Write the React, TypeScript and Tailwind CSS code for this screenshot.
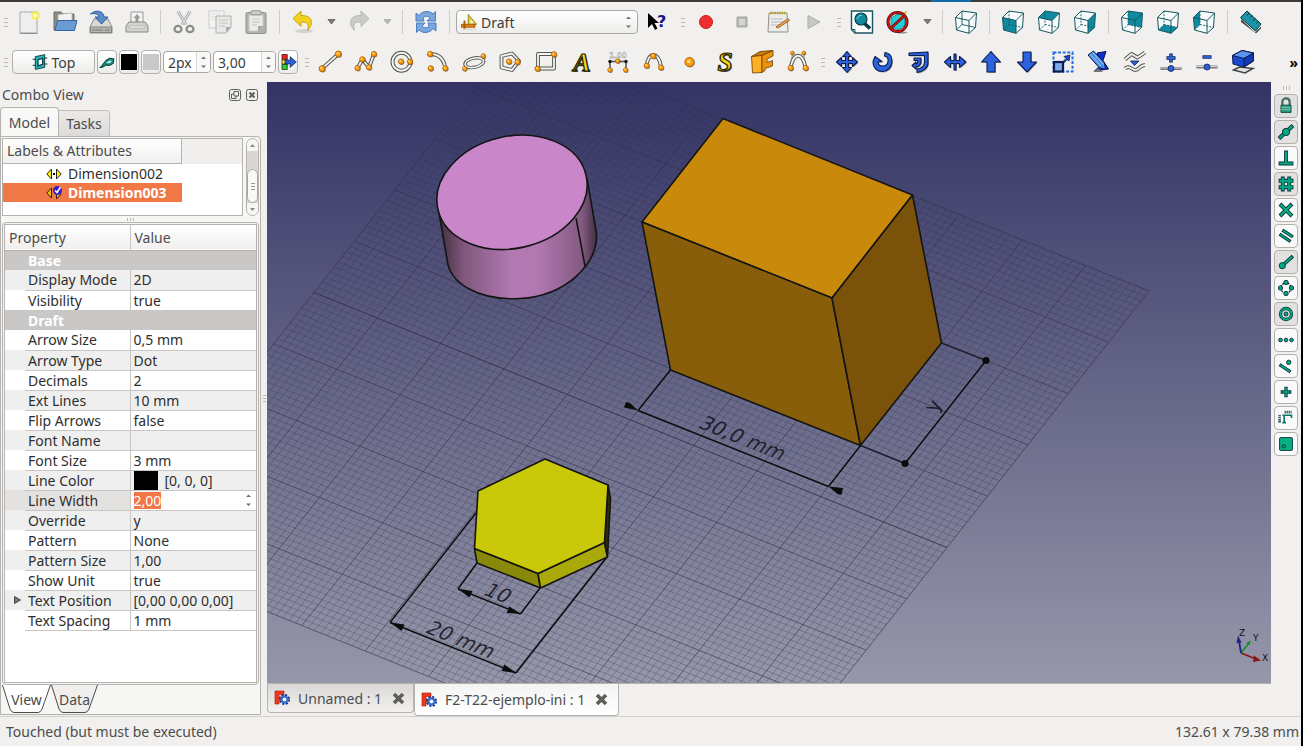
import type { ReactNode } from "react";

/* ---------- icon primitives ---------- */

function Icon({ children, size = 24 }: { children: ReactNode; size?: number }) {
  return (
    <svg width={size} height={size} viewBox="0 0 24 24" fill="none" className="shrink-0 overflow-visible" aria-hidden="true">
      {children}
    </svg>
  );
}

function Ball({ x, y, r = 2.6 }: { x: number; y: number; r?: number }) {
  return (
    <g>
      <circle cx={x + 0.7} cy={y + 0.8} r={r} fill="#000" opacity="0.45" />
      <circle cx={x} cy={y} r={r} fill="#f99d10" stroke="#b36200" strokeWidth="0.9" />
      <circle cx={x - 0.7} cy={y - 0.7} r={r * 0.4} fill="#ffd27a" />
    </g>
  );
}

function Tube({ d }: { d: string }) {
  return (
    <g strokeLinejoin="round">
      <path d={d} stroke="#555753" strokeWidth="3.8" />
      <path d={d} stroke="#f4f4f2" strokeWidth="1.8" />
    </g>
  );
}

function Blue({ d }: { d: string }) {
  return (
    <g strokeLinejoin="round">
      <path d={d} transform="translate(1 1)" fill="#777" opacity="0.6" />
      <path d={d} fill="#2c62dd" stroke="#0c1d4d" strokeWidth="1.1" />
    </g>
  );
}

function Cube({ face }: { face?: string }) {
  return (
    <Icon>
      <path d="M1.500 7.500 8 1 22.500 3 21.500 17.500 15 23.300 2.500 20z" fill="#f8fbfb" />
      {face && <path d={face} fill="#0e8ba0" />}
      <g stroke="#16565f" strokeLinejoin="round">
        <path d="M1.500 7.500 15 10.500V23.300L2.500 20zM1.500 7.500 8 1 22.500 3 15 10.500M22.500 3 21.500 17.500 15 23.300" />
        <path d="M8 1V14.500L2.500 20M8 14.500l13.500 3" strokeWidth=".9" strokeDasharray={face ? "2 1.2" : undefined} />
      </g>
    </Icon>
  );
}

const faces = {
  front: "M1.5 7.5 15 10.5V23.3L2.5 20z",
  top: "M1.5 7.5 8 1 22.5 3 15 10.5z",
  right: "M15 10.5 22.5 3 21.5 17.5 15 23.3z",
  rear: "M8 1 22.5 3 21.5 17.5 8 14.5z",
  bottom: "M2.5 20 8 14.5 21.5 17.5 15 23.3z",
  left: "M1.5 7.5 8 1V14.5L2.5 20z",
};

/* ---------- toolbar pieces ---------- */

function Handle() {
  return (
    <span className="flex h-8 w-[11px] shrink-0 flex-col items-center justify-center gap-[3px]">
      <i className="h-px w-1 bg-[#bdbbb8]" />
      <i className="h-px w-1 bg-[#bdbbb8]" />
      <i className="h-px w-1 bg-[#bdbbb8]" />
    </span>
  );
}

function Separator() {
  return (
    <span className="flex w-[11px] shrink-0 justify-center">
      <i className="h-6 w-px bg-[#cfcdca]" />
    </span>
  );
}

function ToolButton({ label, children }: { label: string; children: ReactNode }) {
  return (
    <button type="button" aria-label={label} title={label} className="flex h-8 w-9 shrink-0 items-center justify-center">
      {children}
    </button>
  );
}

function MenuArrow({ label, faded }: { label: string; faded?: boolean }) {
  return (
    <button type="button" aria-label={label} className="flex h-8 w-5 shrink-0 items-center justify-center">
      <svg width="9" height="6" viewBox="0 0 9 6" aria-hidden="true">
        <path d="M1 .5h7L4.500 5z" fill={faded ? "#b9b7b4" : "#807e7b"} stroke={faded ? "#aaa8a5" : "#5f5e5b"} strokeWidth=".8" />
      </svg>
    </button>
  );
}

function StepArrows() {
  return (
    <svg width="7" height="14" viewBox="0 0 7 14" fill="#73716e" aria-hidden="true">
      <path d="M3.500 1.500 6 4H1zM3.500 13 6 10.500H1z" />
    </svg>
  );
}

function Spin({ label, value, wide }: { label: string; value: string; wide?: boolean }) {
  return (
    <span
      className={`flex h-[22px] shrink-0 items-center overflow-hidden rounded border border-[#a9a6a2] bg-white ${
        wide ? "w-[63px]" : "w-12"
      }`}
    >
      <input aria-label={label} defaultValue={value} className="h-full min-w-0 flex-1 pl-1 text-[14px] text-[#3c3c3c] outline-none" />
      <span className="flex h-full w-[14px] items-center justify-center border-l border-[#d8d6d3] bg-[#f8f8f7]">
        <StepArrows />
      </span>
    </span>
  );
}

const boxed =
  "flex h-6 shrink-0 items-center justify-center rounded border border-[#b3b0ac] bg-linear-to-b from-white to-[#ececea]";

/* ---------- icons of the file and view toolbar ---------- */

const fileIcons: [string, ReactNode][] = [
  [
    "New",
    <Icon>
      <path d="M3 2h17v21H3z" fill="#eee" stroke="#a9a9a7" />
      <path d="M3 23.4h17.5" stroke="#888" />
      <circle cx="18.5" cy="5.5" r="4.5" fill="#f7ee3c" opacity=".75" />
      <circle cx="18.5" cy="5.5" r="2" fill="#fffbc0" />
    </Icon>,
  ],
  [
    "Open",
    <Icon>
      <path d="M1 20V2h7l2 2h11v16z" fill="#8b8b88" stroke="#6c6c69" />
      <path d="M5 4.5 19 3v8H5z" fill="#f3f3f2" stroke="#b0b0ad" strokeWidth=".8" />
      <path d="M4.5 10.5H24l-2.5 10H2z" fill="#6a9bd3" stroke="#3465a4" />
    </Icon>,
  ],
  [
    "Save",
    <Icon>
      <path d="M5 9h14l4 8v6H1v-6z" fill="#d9d9d7" stroke="#888" />
      <path d="M1.5 17h21v5.5h-21z" fill="#b4b4b1" stroke="#858582" />
      <path d="M3 20h11M16 20h5" stroke="#7b7b78" />
      <path d="M1.500 4C7-1 15 1 15 7h4l-6.500 7L6 7h4c0-3-4-4-8.500-3z" fill="#5b8cc6" stroke="#2f5f9f" />
    </Icon>,
  ],
  [
    "Print",
    <Icon>
      <path d="M6 2h12v11H6z" fill="#f3f3f2" stroke="#999" />
      <path d="M12 4l3.500 4h-2v4h-3V8h-2z" fill="#999" />
      <path d="M4 12h16l3 4v6H1v-6z" fill="#d3d3d0" stroke="#858582" />
      <path d="M4 16h16v2H4z" fill="#fafafa" stroke="#999" strokeWidth=".6" />
    </Icon>,
  ],
];

const clipIcons: [string, ReactNode][] = [
  [
    "Cut",
    <Icon>
      <path d="M6 1.500l8 13M18 1.500l-8 13" stroke="#aaa" strokeWidth="3" />
      <path d="M6 1.500l8 13M18 1.500l-8 13" stroke="#e2e2e0" strokeWidth="1.200" />
      <ellipse cx="6" cy="19" rx="3.500" ry="3.200" stroke="#8c8c89" strokeWidth="2.200" />
      <ellipse cx="18" cy="19" rx="3.500" ry="3.200" stroke="#8c8c89" strokeWidth="2.200" />
    </Icon>,
  ],
  [
    "Copy",
    <Icon>
      <path d="M1 1h15v17H1z" fill="#f4f4f3" stroke="#ccc" />
      <path d="M3 4h10M3 7h10M3 10h10" stroke="#ddd" />
      <path d="M8 6h15v11l-5 6H8z" fill="#e9e9e7" stroke="#b0b0ad" />
      <path d="M11 10h9M11 13h9M11 16h6" stroke="#c2c2bf" />
      <path d="M18 23v-6h5z" fill="#aaa" />
    </Icon>,
  ],
  [
    "Paste",
    <Icon>
      <rect x="2" y="2.500" width="20" height="21" rx="1.500" fill="#b0b0ad" stroke="#8f8f8c" />
      <path d="M5 5h14v11l-5 5H5z" fill="#ececea" stroke="#c8c8c5" />
      <path d="M8 9h8M8 12h8M8 15h5" stroke="#c2c2bf" />
      <rect x="7" y=".800" width="10" height="4" rx="1" fill="#cfcfcc" stroke="#8f8f8c" />
      <path d="M14 21v-5h5z" fill="#a5a5a2" />
    </Icon>,
  ],
];

const viewIcons: [string, ReactNode][] = [
  [
    "Fit all",
    <Icon>
      <path d="M1.500 1H22.500V23H5L1.500 19.500z" fill="#fff" stroke="#16565f" strokeWidth="1.400" />
      <path d="M1.500 19.500H5V23" stroke="#16565f" />
      <path d="M14 13l6 5.500" stroke="#083c46" strokeWidth="3.600" />
      <circle cx="11" cy="9" r="6" fill="#0e8ba0" stroke="#083c46" strokeWidth="1.200" />
      <path d="M7.500 9a3.500 3.500 0 0 1 4-3.500" stroke="#8fe0ea" />
    </Icon>,
  ],
  [
    "Draw style",
    <Icon>
      <path d="M12 21.500l10 .5-3 1.500h-7z" fill="#333" opacity=".5" />
      <path d="M5 8l6-3.500h8v11l-6 4-8-1.500z" fill="#21cfd9" stroke="#0b7f88" strokeWidth=".8" />
      <path d="M14 8l6.500-6.500" stroke="#e8b53a" strokeWidth="2" />
      <circle cx="11.500" cy="12" r="9.500" stroke="#5a0909" strokeWidth="3" />
      <path d="M5 18 18 6" stroke="#5a0909" strokeWidth="3" />
      <circle cx="11.500" cy="12" r="9.500" stroke="#c81818" strokeWidth="1.700" />
      <path d="M5 18 18 6" stroke="#c81818" strokeWidth="1.700" />
    </Icon>,
  ],
];

/* ---------- draft creation and modification icons ---------- */

const draftIcons: [string, ReactNode][] = [
  ["Line", <Icon><Tube d="M4 18.700 20.300 4" /><Ball x={4} y={18.7} r={3} /><Ball x={20.3} y={4} r={3} /></Icon>],
  [
    "Wire",
    <Icon>
      <Tube d="M3.500 18l5-8.500 6.500 8L20 4" />
      <Ball x={3.5} y={18} /><Ball x={8.3} y={9.3} /><Ball x={15} y={17.3} /><Ball x={20} y={4} />
    </Icon>,
  ],
  [
    "Circle",
    <Icon>
      <circle cx="11.500" cy="11.700" r="9" stroke="#555753" strokeWidth="4" />
      <circle cx="11.500" cy="11.700" r="9" stroke="#f4f4f2" strokeWidth="2" />
      <Ball x={11} y={11.5} /><Ball x={20} y={11.7} />
    </Icon>,
  ],
  ["Arc", <Icon><Tube d="M4 4C13 4 18 9 19.300 18.300" /><Ball x={4} y={4} /><Ball x={4.7} y={18.3} /><Ball x={19.3} y={18.3} /></Icon>],
  [
    "Ellipse",
    <Icon>
      <g transform="rotate(-12 12.300 12.700)">
        <ellipse cx="12.300" cy="12.700" rx="9.500" ry="4.600" stroke="#555753" strokeWidth="3.400" />
        <ellipse cx="12.300" cy="12.700" rx="9.500" ry="4.600" stroke="#f4f4f2" strokeWidth="1.600" />
      </g>
      <Ball x={2.7} y={18.7} r={2.2} /><Ball x={21.3} y={6} r={2.2} />
    </Icon>,
  ],
  ["Polygon", <Icon><Tube d="M3.500 6 14 3.500l7 7.500-7 9-10.500-2.500z" /><Ball x={11} y={11.5} /><Ball x={19.5} y={12} /></Icon>],
  ["Rectangle", <Icon><Tube d="M4 4h16v14.500H4z" /><Ball x={20} y={4.3} /><Ball x={3.5} y={18.7} /></Icon>],
  [
    "Text",
    <Icon>
      <g fontFamily="'Liberation Serif', serif" fontWeight="700" fontStyle="italic" fontSize="26" textAnchor="middle">
        <text x="13" y="22" fill="#555">A</text>
        <text x="12" y="21" fill="#ffd21f" stroke="#1a1a00" strokeWidth="1.200">A</text>
      </g>
    </Icon>,
  ],
  [
    "Dimension",
    <Icon>
      <text x="12" y="8" fontFamily="'Liberation Sans', sans-serif" fontWeight="700" fontSize="9" textAnchor="middle" fill="#fff" stroke="#888" strokeWidth=".400">1.00</text>
      <path d="M4 12v8M20 12v8" stroke="#777" strokeWidth="2" />
      <path d="M4 11.500h16" stroke="#555" strokeWidth="1.600" />
      <circle cx="4" cy="11.500" r="1.700" fill="#111" /><circle cx="20" cy="11.500" r="1.700" fill="#111" />
      <Ball x={11.7} y={11} r={2.2} /><Ball x={4} y={20} r={2.2} /><Ball x={19.7} y={20} r={2.2} />
    </Icon>,
  ],
  ["B-spline", <Icon><Tube d="M4.700 16C5 3 17 0 19 17" /><Ball x={4.7} y={15.7} /><Ball x={11.3} y={6} /><Ball x={19} y={17.5} /></Icon>],
  ["Point", <Icon><Ball x={11.5} y={12} r={4.6} /></Icon>],
  [
    "Shape string",
    <Icon>
      <g fontFamily="'Liberation Serif', serif" fontWeight="700" fontStyle="italic" fontSize="27" textAnchor="middle">
        <text x="12" y="21.500" fill="#555">S</text>
        <text x="11" y="20.500" fill="#f3cf1a" stroke="#2b2500" strokeWidth="1.200">S</text>
      </g>
    </Icon>,
  ],
  [
    "Facebinder",
    <Icon>
      <g stroke="#6b3f00" strokeLinejoin="round" strokeWidth=".8">
        <path d="M1.500 6.500 10 1.500 23 .500 12 5.500z" fill="#c77c07" />
        <path d="M1.500 6.500 12 5.500V22.500L2.500 23z" fill="#ffae24" />
        <path d="M12 5.500 23 .500V6l-6 3v3.500l5.500-2v5.500L15 18.500v2L12 22.500z" fill="#ec920f" />
      </g>
    </Icon>,
  ],
  [
    "Bezier curve",
    <Icon>
      <path d="M4.700 17 6.500 3M19.500 17 17.500 3" stroke="#777" strokeWidth=".800" />
      <Tube d="M4.700 17C8 2 16 2 19.500 17" />
      <Ball x={6.3} y={3} r={1.8} /><Ball x={17.7} y={3} r={1.8} />
      <Ball x={4.7} y={18} /><Ball x={19.7} y={18} />
    </Icon>,
  ],
];

const modifyIcons: [string, ReactNode][] = [
  ["Move", <Icon><Blue d="M12 1.500l4.500 5h-3v4h4v-3l5 4.500-5 4.500v-3h-4v4h3L12 22.500 7.500 17.500h3v-4h-4v3l-5-4.500 5-4.500v3h4v-4h-3z" /></Icon>],
  ["Rotate", <Icon><Blue d="M2 11.500c0 14 19 13 19-.500 0-5-3-8-7-8.500L13.500 6c3 .500 4 3 3.500 5.500-1 6-9.500 6-10 .500l4-.500L4 6.500z" /></Icon>],
  ["Offset", <Icon><Blue d="M2 3l19-1v11c0 5-5 9-11 9.500V19c4 0 7.500-3 7.500-7V5.500H2zM7 8h7v4c0 3-3 5-5 5v2l-4-3.500L9 12v2c2 0 2-3 1.500-3.500H7z" /></Icon>],
  ["Trimex", <Icon><Blue d="M1.500 12 7.500 6.500v4H11V4h2v6.500h3.500v-4L23 12l-6.500 5.500v-4H13V20h-2v-6.500H7.500v4z" /></Icon>],
  ["Upgrade", <Icon><Blue d="M12 1.500 21.500 12H16v10H8V12H2.500z" /></Icon>],
  ["Downgrade", <Icon><Blue d="M12 22 2.500 12H8V2h8v10h5.500z" /></Icon>],
  [
    "Scale",
    <Icon>
      <rect x="2.500" y="2.500" width="19" height="19" stroke="#1f6fe8" strokeWidth="2" strokeDasharray="3 1.600" />
      <rect x="3" y="12" width="9" height="9.500" fill="#7fa9ea" stroke="#0c1d4d" strokeWidth="2.200" />
      <path d="M12 11.500l3-3-2-2 6-1.500-1 6-2-1.500-2.500 3z" fill="#1b49c8" stroke="#0c1d4d" strokeWidth=".800" />
    </Icon>,
  ],
  [
    "Edit",
    <Icon>
      <path d="M10 3l9-1.500-3 9 5.500 8.500-14 2L14 15z" fill="#0d2fd0" stroke="#06123f" />
      <path d="M1 5 6.500 1l11 12 1 6.500-6.500-2z" fill="#4a8de8" stroke="#0c1d4d" />
      <path d="M3 4l11 12M5.500 2.500l11 12" stroke="#a9cbf8" />
      <path d="M6 22l5-3.500 5 3.500z" fill="#777" />
    </Icon>,
  ],
  [
    "Wire to B-spline",
    <Icon>
      <Tube d="M2 9.500 8.500 4l6 3.500L22 2.500" />
      <Tube d="M2 18.500C7 14 9 21 13 20s3-4.500 9-5" />
      <path d="M7.500 11h8.500l-4.500 4.500z" fill="#2c62dd" stroke="#0c1d4d" strokeWidth=".8" />
    </Icon>,
  ],
  [
    "Add point",
    <Icon>
      <path d="M12 3.500v9M7.500 8h9" stroke="#0c1d4d" strokeWidth="3.400" />
      <path d="M12 4.300v7.400M8.300 8h7.400" stroke="#2c62dd" strokeWidth="1.900" />
      <path d="M1.500 18.500h21" stroke="#777" strokeWidth="3" /><path d="M2 18h20" stroke="#ddd" />
      <circle cx="12" cy="18.500" r="3" fill="#2c62dd" stroke="#0c1d4d" strokeWidth=".800" />
    </Icon>,
  ],
  [
    "Delete point",
    <Icon>
      <path d="M7.500 7h9" stroke="#0c1d4d" strokeWidth="3.400" /><path d="M8.300 7h7.400" stroke="#2c62dd" strokeWidth="1.900" />
      <path d="M1.500 17h21" stroke="#777" strokeWidth="3" /><path d="M2 16.500h20" stroke="#ddd" />
      <circle cx="12" cy="17" r="3" fill="#2c62dd" stroke="#0c1d4d" strokeWidth=".800" />
    </Icon>,
  ],
  [
    "Shape 2D view",
    <Icon>
      <path d="M2.500 20l6-3 13.500 1.500-8 4.500z" fill="#e6e6e4" stroke="#444" strokeWidth="1.500" />
      <path d="M1.500 5.500 11 .500l11.500 2.500V11L13 17 2 14z" fill="#1a49cf" stroke="#081a52" />
      <path d="M1.500 5.500 11 .500l11.500 2.500L13 8.500z" fill="#5b93f0" stroke="#081a52" />
      <path d="M13 8.500 22.500 3v8L13 17z" fill="#1238b4" stroke="#081a52" />
    </Icon>,
  ],
];

/* ---------- snap icons ---------- */

function Green({ d, w = 3 }: { d: string; w?: number }) {
  return (
    <g strokeLinecap="square">
      <path d={d} stroke="#08323a" strokeWidth={w + 1.8} />
      <path d={d} stroke="#06a880" strokeWidth={w} />
    </g>
  );
}

function Dots({ at, r = 2.4 }: { at: number[][]; r?: number }) {
  return (
    <>
      {at.map(([x, y]) => (
        <circle key={`${x}-${y}`} cx={x} cy={y} r={r} fill="#06a880" stroke="#08323a" strokeWidth="1" />
      ))}
    </>
  );
}

const snapIcons: { label: string; on: boolean; art: ReactNode }[] = [
  {
    label: "Snap lock",
    on: true,
    art: (
      <>
        <path d="M8 11V7.500c0-5 8-5 8 0V11" stroke="#406a62" strokeWidth="2.400" />
        <path d="M6.500 11h11v8h-11z" fill="#2b9a7d" stroke="#0d4a3c" />
        <path d="M7 13.500h10M7 16h10" stroke="#72c9b0" />
      </>
    ),
  },
  { label: "Snap midpoint", on: true, art: <><Green d="M6 17.500 18 6.500" w={2.6} /><Dots at={[[12, 12]]} r={4} /></> },
  { label: "Snap perpendicular", on: false, art: <Green d="M12 6v11M6 18h12" w={2.4} /> },
  { label: "Snap grid", on: true, art: <Green d="M8.500 6v12M15.500 6v12M6 8.500h12M6 15.500h12" w={2.4} /> },
  { label: "Snap intersection", on: false, art: <Green d="M7 7l10 10M17 7 7 17" w={2.6} /> },
  { label: "Snap parallel", on: false, art: <Green d="M6.500 11l9 6M9.500 6.500l8.500 5.500" w={1.8} /> },
  { label: "Snap endpoint", on: true, art: <><Green d="M9 15l9-8" w={2.2} /><Dots at={[[8, 16]]} r={3.4} /></> },
  {
    label: "Snap angle",
    on: false,
    art: (
      <>
        <circle cx="12" cy="12" r="5.500" stroke="#08323a" strokeWidth="1.500" strokeDasharray="2 1" />
        <circle cx="12" cy="12" r="3" fill="#fafafa" />
        <Dots at={[[12, 6], [18, 12], [12, 18], [6, 12]]} />
      </>
    ),
  },
  {
    label: "Snap center",
    on: true,
    art: (
      <>
        <circle cx="12" cy="12" r="6" stroke="#08323a" strokeWidth="3.600" />
        <circle cx="12" cy="12" r="6" stroke="#06a880" strokeWidth="2" />
        <Dots at={[[12, 12]]} r={2.2} />
      </>
    ),
  },
  { label: "Snap extension", on: false, art: <Dots at={[[6, 12], [12, 12], [18, 12]]} r={2} /> },
  { label: "Snap near", on: false, art: <><Green d="M6.500 11.500l9 6" w={1.8} /><Dots at={[[15, 8]]} r={2.4} /></> },
  { label: "Snap ortho", on: false, art: <Green d="M12 8v8M8 12h8" w={1.8} /> },
  {
    label: "Snap dimensions",
    on: false,
    art: (
      <>
        <path d="M10 18V9h8v3M8 9h4M8 17h4" stroke="#0c7a62" strokeWidth="1.800" />
        <path d="M5 9v8" stroke="#08323a" strokeWidth="3" strokeDasharray="1.200 1" />
        <path d="M10.500 5.500h7.500" stroke="#08323a" strokeWidth="3" strokeDasharray="1.200 1" />
      </>
    ),
  },
  {
    label: "Working plane",
    on: false,
    art: (
      <>
        <rect x="5" y="5" width="14" height="14" rx="1" fill="#06b083" stroke="#08323a" />
        <circle cx="9.500" cy="14.500" r="1.800" stroke="#08323a" />
      </>
    ),
  },
];

/* ---------- property editor ---------- */

type Property = { name: string; value?: string; group?: boolean };

const properties: Property[] = [
  { name: "Base", group: true },
  { name: "Display Mode", value: "2D" },
  { name: "Visibility", value: "true" },
  { name: "Draft", group: true },
  { name: "Arrow Size", value: "0,5 mm" },
  { name: "Arrow Type", value: "Dot" },
  { name: "Decimals", value: "2" },
  { name: "Ext Lines", value: "10 mm" },
  { name: "Flip Arrows", value: "false" },
  { name: "Font Name", value: "" },
  { name: "Font Size", value: "3 mm" },
  { name: "Line Color", value: "[0, 0, 0]" },
  { name: "Line Width", value: "2,00" },
  { name: "Override", value: "y" },
  { name: "Pattern", value: "None" },
  { name: "Pattern Size", value: "1,00" },
  { name: "Show Unit", value: "true" },
  { name: "Text Position", value: "[0,00 0,00 0,00]" },
  { name: "Text Spacing", value: "1 mm" },
];

function PropertyValue({ property }: { property: Property }) {
  if (property.name === "Line Color") {
    return (
      <span className="flex items-center gap-[7px]">
        <i className="h-[19px] w-6 bg-black" />
        {property.value}
      </span>
    );
  }
  if (property.name === "Line Width") {
    return (
      <span className="flex items-center justify-between pr-1">
        <input aria-label="Line Width" defaultValue={property.value} className="h-[17px] field-sizing-content bg-[#f07746] text-white outline-none" />
        <StepArrows />
      </span>
    );
  }
  return <>{property.value}</>;
}

function PropertyTable() {
  return (
    <table className="w-full table-fixed border-collapse text-left leading-[19px] whitespace-nowrap text-[#2e2e2e]">
      <colgroup>
        <col className="w-5" />
        <col className="w-[105px]" />
        <col />
      </colgroup>
      <thead>
        <tr className="h-[25px] border-b border-[#b5b2af] bg-linear-to-b from-white to-[#f0efee] text-[#4c4c4c]">
          <th colSpan={2} className="border-r border-[#c8c6c3] pl-1 font-normal">Property</th>
          <th className="pl-1 font-normal">Value</th>
        </tr>
      </thead>
      <tbody>
        {properties.map((property, i) =>
          property.group ? (
            <tr key={property.name} className="h-5 bg-[#c9c8c7] font-bold text-white">
              <td className="p-0" />
              <td colSpan={2} className="p-0 pl-[3px]">{property.name}</td>
            </tr>
          ) : (
            <tr key={property.name} className={`h-5 ${i % 2 ? "bg-[#efefef]" : "bg-white"}`}>
              <td className={`p-0 ${property.name === "Line Width" ? "bg-[#e3e2e0]" : ""}`}>
                {property.name === "Text Position" && (
                  <svg width="7" height="8" viewBox="0 0 7 8" className="ml-[9px]" aria-hidden="true">
                    <path d="M.5.5v7l6-3.500z" fill="#777" stroke="#444" />
                  </svg>
                )}
              </td>
              <td className={`border-r border-b border-[#c8c6c3] p-0 pl-[3px] ${property.name === "Line Width" ? "bg-[#e3e2e0]" : ""}`}>
                {property.name}
              </td>
              <td className={`border-b border-[#c8c6c3] p-0 pl-[3px] ${property.name === "Line Width" ? "bg-white" : ""}`}>
                <PropertyValue property={property} />
              </td>
            </tr>
          ),
        )}
      </tbody>
    </table>
  );
}

function ComboView() {
  return (
    <aside className="flex w-[261px] shrink-0 flex-col">
      <div className="flex h-[25px] items-center gap-[5px] pr-[3px] pl-[2px]">
        <h2 className="flex-1 text-[#4c4c4c]">Combo View</h2>
        <button type="button" aria-label="Float panel">
          <svg width="12" height="12" viewBox="0 0 12 12" fill="none" stroke="#5f5e5b" aria-hidden="true">
            <rect x=".500" y=".500" width="11" height="11" rx="2" />
            <path d="M5 2.500h4.500V7H5zM7 7v2.500H2.500V5H5" />
          </svg>
        </button>
        <button type="button" aria-label="Close panel">
          <svg width="12" height="12" viewBox="0 0 12 12" fill="none" stroke="#5f5e5b" aria-hidden="true">
            <rect x=".500" y=".500" width="11" height="11" rx="2" />
            <path d="M3.500 3.500l5 5M8.500 3.500l-5 5" strokeWidth="2" />
          </svg>
        </button>
      </div>
      <div role="tablist" className="flex items-end text-[#4c4c4c]">
        <button type="button" role="tab" aria-selected="true" className="h-[29px] w-[59px] rounded-t border border-b-0 border-[#b5b2af] bg-[#f8f8f7]">
          Model
        </button>
        <button type="button" role="tab" aria-selected="false" className="h-[26px] w-[51px] rounded-tr border border-b-0 border-l-0 border-[#c2bfbc] bg-linear-to-b from-[#ebeae8] to-[#dddbd9]">
          Tasks
        </button>
      </div>

      <div className="flex flex-1 flex-col rounded-tr border border-[#b5b2af] bg-[#f6f6f5] px-px pt-px">
        <div className="flex h-[78px] gap-[3px]">
          <div className="flex-1 border border-[#b5b2af] bg-white">
            <div className="flex h-[25px] bg-[#f0efee]">
              <div className="w-[179px] border-r border-b border-[#b5b2af] bg-linear-to-b from-white to-[#f0efee] pl-1 leading-6 text-[#4c4c4c]">
                Labels &amp; Attributes
              </div>
            </div>
            <ul role="tree" className="leading-[19px]">
              <li role="treeitem" className="flex h-[19px] w-[179px] items-center gap-[6px] pl-[43px] text-[#2e2e2e]">
                <svg width="16" height="12" viewBox="0 0 16 12" aria-hidden="true">
                  <path d="M5.500 1v10L.800 6zM10.500 1v10l4.700-5z" fill="#ffee00" stroke="#222" />
                  <path d="M7 5h2v2H7z" />
                </svg>
                Dimension002
              </li>
              <li role="treeitem" aria-selected="true" className="flex h-[19px] w-[179px] items-center gap-[6px] bg-[#f07746] pl-[43px] font-bold text-white">
                <svg width="16" height="14" viewBox="0 0 16 14" fill="none" aria-hidden="true">
                  <path d="M5.500 2v10L.800 7zM10.500 3v10l4.700-5z" fill="#f0c000" stroke="#222" />
                  <circle cx="11.500" cy="4.500" r="4.500" fill="#3a1fc4" />
                  <path d="M9 4.500l2 2L14.500 1" stroke="#fff" strokeWidth="1.500" />
                </svg>
                Dimension003
              </li>
            </ul>
          </div>
          <div className="flex w-[13px] flex-col items-center rounded-full border border-[#b5b2af] bg-[#d9d7d5]">
            <span className="flex h-3 w-full items-center justify-center rounded-t-full bg-[#f6f6f5]">
              <svg width="5" height="3" viewBox="0 0 5 3" aria-hidden="true"><path d="M0 3h5L2.500 0z" fill="#888" /></svg>
            </span>
            <span className="mt-[18px] flex w-full flex-1 flex-col items-center justify-center gap-[2px] rounded-full border border-[#a9a6a2] bg-[#f8f8f7]">
              <i className="h-px w-1 bg-[#999]" />
              <i className="h-px w-1 bg-[#999]" />
              <i className="h-px w-1 bg-[#999]" />
            </span>
            <span className="flex h-3 w-full items-center justify-center rounded-b-full bg-[#f6f6f5]">
              <svg width="5" height="3" viewBox="0 0 5 3" aria-hidden="true"><path d="M0 0h5L2.500 3z" fill="#888" /></svg>
            </span>
          </div>
        </div>
        <div className="flex h-[6px] items-center justify-center gap-[2px]">
          <i className="h-[3px] w-px bg-[#b5b2af]" />
          <i className="h-[3px] w-px bg-[#b5b2af]" />
          <i className="h-[3px] w-px bg-[#b5b2af]" />
        </div>
        <div className="flex-1 rounded-sm border border-[#b5b2af] p-px">
          <div className="h-full border border-[#b5b2af] bg-white">
            <PropertyTable />
          </div>
        </div>
        <div role="tablist" className="flex h-[29px] items-start text-[#4c4c4c]">
          <PanelTab label="View" width={49} selected />
          <PanelTab label="Data" width={47} />
        </div>
      </div>
    </aside>
  );
}

function PanelTab({ label, width, selected }: { label: string; width: number; selected?: boolean }) {
  return (
    <button
      type="button"
      role="tab"
      aria-selected={!!selected}
      className="relative h-7 shrink-0"
      style={{ width }}
    >
      <svg className="absolute inset-0 size-full" viewBox={`0 0 ${width} 28`} preserveAspectRatio="none" aria-hidden="true">
        <path
          d={`M.5 0 8 24q1.500 3.500 4 3.500H${width - 13}q2.500 0 4-3.500L${width - 0.5} 0`}
          fill={selected ? "#fff" : "#f0efed"}
          stroke="#4c4c4c"
        />
      </svg>
      <span className="relative">{label}</span>
    </button>
  );
}

/* ---------- 3D viewport ---------- */

// grid corner and the screen vectors of one 10 mm cell
const corner = { x: 516, y: 36 };
const u = { x: 63.3, y: 25.5 };
const v = { x: -40.4, y: 51.3 };

function gridPath(step: number, skip?: number) {
  let d = "";
  for (let i = 0; i <= 100; i += step) {
    if (skip && i % skip === 0) continue;
    const k = i / 10;
    d += `M${corner.x + u.x * k} ${corner.y + u.y * k}l${v.x * 10} ${v.y * 10}`;
    d += `M${corner.x + v.x * k} ${corner.y + v.y * k}l${u.x * 10} ${u.y * 10}`;
  }
  return d;
}

function Viewport() {
  return (
    <svg
      viewBox="267 82 1004 601"
      preserveAspectRatio="xMidYMid slice"
      className="min-h-0 w-full grow basis-0"
      role="img"
      aria-label="3D view"
      fill="none"
    >
      <defs>
        <linearGradient id="sky" x1="0" y1="0" x2="0" y2="1">
          <stop offset="0" stopColor="#333365" />
          <stop offset="1" stopColor="#9797aa" />
        </linearGradient>
        <linearGradient id="side" x1="440" y1="0" x2="598" y2="0" gradientUnits="userSpaceOnUse">
          <stop offset="0" stopColor="#43303f" />
          <stop offset=".15" stopColor="#80587d" />
          <stop offset=".45" stopColor="#b178b1" />
          <stop offset=".62" stopColor="#b178b1" />
          <stop offset=".9" stopColor="#835a82" />
          <stop offset="1" stopColor="#3b2a3b" />
        </linearGradient>
      </defs>
      <rect x="267" y="82" width="1004" height="601" fill="url(#sky)" />
      <path d={gridPath(1, 10)} stroke="#303048" strokeOpacity=".36" strokeWidth=".8" />
      <path d={gridPath(10)} stroke="#303048" strokeOpacity=".6" />
      <path d="M314 292.500l633 255" stroke="#24243f" strokeOpacity=".35" />

      {/* cylinder */}
      <g stroke="#141414" strokeWidth="1.600" strokeLinejoin="round">
        <path d="M438 207 447 259C449 284 480 301 520 298.500 565 296 598 265 596.500 233L587 179z" fill="url(#side)" />
        <ellipse cx="512" cy="192.300" rx="76" ry="56" transform="rotate(-13 512 192.300)" fill="#c987c9" />
        <path d="M576 218l9 48" />
      </g>

      {/* box */}
      <g stroke="#141414" strokeWidth="1.600" strokeLinejoin="round">
        <path d="M723 118.500 912.500 195 832 298 642 222z" fill="#c98a0b" />
        <path d="M642 222 832 298 860.500 445.500 670.500 370z" fill="#885e0a" />
        <path d="M912.500 195 941.500 343 860.500 445.500 832 298z" fill="#7a520a" />
      </g>

      {/* dimension extension lines */}
      <g stroke="#0c0c0c" strokeWidth="1.400">
        <path d="M670.500 370 638 410.500M860.500 445.500 828.500 486.500" />
        <path d="M941.500 343 986 360.500M860.500 445.500 905 463.500" stroke="#20202c" />
        <path d="M638 410.500 828.500 486.500M986 360.500 905 463.500" />
        <path d="M477 563 458 589M540 588 520.500 614M476 513 390 622.500M607 557 516 673" />
        <path d="M458 589 520.500 614M390 622.500 516 673" />
      </g>
      <g fill="#0c0c0c">
        <circle cx="986" cy="360.500" r="3.600" />
        <circle cx="905" cy="463.500" r="3.600" />
        <path d="M638 410.500 624 407.500l2-5.500 4 1zM828.500 486.500l14.500 1.500-1.500 7-4-1z" />
        <path d="M458 589l14.500 2-3 6.500zM520.500 614l-11-7.500-3 6.500z" />
        <path d="M390 622.500l14.500 2-3 6.500zM516 673l-11.500-8.500-3 6.500z" />
      </g>

      {/* hexagonal prism */}
      <g stroke="#141414" strokeWidth="1.600" strokeLinejoin="round">
        <path d="M474.500 548.500 538 573.500 540.500 588 477 563z" fill="#898909" />
        <path d="M538 573.500 604.500 542.500 607.500 557 540.500 588z" fill="#a9a909" />
        <path d="M608 485 610.500 499 607.500 557 604.500 542.500z" fill="#2f2f08" />
        <path d="M545 459 608 485 604.500 542.500 538 573.500 474.500 548.500 478 491z" fill="#c9c909" />
      </g>

      {/* annotations lie in the grid plane */}
      <g fill="#111119" fillOpacity=".85" fontFamily="'DejaVu Sans', sans-serif" fontSize="20">
        <text transform="translate(697 427) rotate(22) skewX(-16)">30,0 mm</text>
        <text transform="translate(482 594) rotate(22) skewX(-16)">10</text>
        <text transform="translate(424 632) rotate(22) skewX(-16)">20 mm</text>
        <text transform="translate(936 413) rotate(-52) skewX(16)">y</text>
      </g>

      {/* axis cross */}
      <g strokeWidth="1.800">
        <path d="M1241 653l15 6" stroke="#8c1616" />
        <path d="M1241 653l8-10" stroke="#1b8c2d" />
        <path d="M1241 653l-2-12" stroke="#20208c" />
      </g>
      <path d="M1254 655.500l7 5-8 1.500z" fill="#8c1616" />
      <path d="M1246.500 643l4.500-2.500-1.500 5z" fill="#1b8c2d" />
      <path d="M1236.500 643l1.500-7.500 3.500 7z" fill="#20208c" />
      <g fill="#111" fontFamily="'DejaVu Sans', sans-serif" fontSize="9">
        <text x="1239" y="636">Z</text>
        <text x="1253" y="641">Y</text>
        <text x="1262" y="661">X</text>
      </g>
    </svg>
  );
}

function AppLogo() {
  return (
    <svg width="16" height="16" viewBox="0 0 16 16" fill="none" aria-hidden="true">
      <path d="M1 1h9v3.500H5V7h3v3H5v4H1z" fill="#f0391c" stroke="#a31407" strokeWidth=".600" />
      <circle cx="10.500" cy="9.500" r="4" stroke="#0e2a78" strokeWidth="3" strokeDasharray="1.800 1.350" />
      <circle cx="10.500" cy="9.500" r="3" stroke="#3a6fd0" strokeWidth="2.400" />
      <circle cx="10.500" cy="9.500" r="1.800" fill="#fff" />
    </svg>
  );
}

function DocumentTab({ title, active }: { title: string; active?: boolean }) {
  return (
    <div
      role="tab"
      aria-selected={!!active}
      className={`flex shrink-0 items-center rounded-b border border-t-0 border-[#b5b2af] pl-[6px] ${
        active ? "h-8 bg-linear-to-b from-[#f4f4f3] to-white pr-[10px]" : "h-[29px] bg-linear-to-b from-[#dad8d6] to-[#f2f1f0] pr-2"
      }`}
    >
      <AppLogo />
      <span className="mr-[10px] ml-2 whitespace-nowrap">{title}</span>
      <button type="button" aria-label={`Close ${title}`}>
        <svg width="13" height="13" viewBox="0 0 13 13" aria-hidden="true">
          <path d="M2 2l9 9M11 2l-9 9" stroke="#5f5e5b" strokeWidth="3.600" />
        </svg>
      </button>
    </div>
  );
}

/* ---------- window ---------- */

function Tools({ items }: { items: [string, ReactNode][] }) {
  return (
    <>
      {items.map(([label, icon]) => (
        <ToolButton key={label} label={label}>{icon}</ToolButton>
      ))}
    </>
  );
}

function FileToolbar() {
  return (
    <div role="toolbar" aria-label="File and view" className="flex h-10 items-center overflow-hidden">
      <Handle />
      <Tools items={fileIcons} />
      <Separator />
      <Tools items={clipIcons} />
      <Separator />
      <ToolButton label="Undo">
        <Icon>
          <ellipse cx="13" cy="21" rx="9" ry="2" fill="#000" opacity=".12" />
          <path d="M2 8.500 10 1v4.500c12 0 13 8 6.500 15 2-6 0-9-6.500-8.500v4.500z" fill="#f2d21f" stroke="#c9a400" />
        </Icon>
      </ToolButton>
      <MenuArrow label="Undo history" />
      <ToolButton label="Redo">
        <Icon>
          <path d="M22 8.500 14 1v4.500c-12 0-13 8-6.500 15-2-6 0-9 6.500-8.500v4.500z" fill="#cbcbc8" stroke="#b5b5b2" />
        </Icon>
      </ToolButton>
      <MenuArrow label="Redo history" faded />
      <Separator />
      <ToolButton label="Refresh">
        <Icon>
          <path d="M2 11V3l3 2.500C8 .500 16 .500 19 4l2.500-2.500V11H13l3-3c-2-2.500-6-2-7 0l1 3z" fill="#7ba8dc" stroke="#4a7fc0" />
          <path d="M22 13v8l-3-2.500C16 23.500 8 23.500 5 20l-2.500 2.500V13H11l-3 3c2 2.500 6 2 7 0l-1-3z" fill="#7ba8dc" stroke="#4a7fc0" />
        </Icon>
      </ToolButton>
      <Separator />
      <div className="relative ml-px w-[182px] shrink-0">
        <select aria-label="Workbench" className="h-6 w-full appearance-none rounded border border-[#a9a6a2] bg-linear-to-b from-white to-[#ededeb] pl-6 text-[#3c3c3c]">
          <option>Draft</option>
        </select>
        <span className="pointer-events-none absolute inset-y-0 left-1 flex items-center">
          <Icon size={18}>
            <path d="M2 22h20" stroke="#ddd" strokeWidth="2" />
            <path d="M11 2v15l11-2z" fill="#e3cf3a" stroke="#7a6a00" />
            <path d="M14 9v5l4-1z" fill="#fff" />
            <path d="M2 15h18v4H2z" fill="#e98412" stroke="#8a4700" /><path d="M6 10v11" stroke="#a85a00" strokeWidth="2.500" />
          </Icon>
        </span>
        <span className="pointer-events-none absolute inset-y-0 right-[6px] flex items-center">
          <StepArrows />
        </span>
      </div>
      <ToolButton label="What's this?">
        <Icon>
          <path d="M4 3v15l4-4 3 6 2.500-1.500L10.500 13H15z" fill="#000" />
          <text x="13" y="17" fontFamily="'DejaVu Sans', sans-serif" fontSize="16" fontWeight="700" fill="#14148a">?</text>
        </Icon>
      </ToolButton>
      <span className="ml-[3px] flex"><Handle /></span>
      <ToolButton label="Record macro">
        <Icon><circle cx="12" cy="12" r="6.500" fill="#ee2f2f" stroke="#cc1c1c" /></Icon>
      </ToolButton>
      <ToolButton label="Stop macro">
        <Icon><path d="M7 7h10v10H7z" fill="#b5b5b2" stroke="#a5a5a2" /><path d="M9 9h6v6H9z" fill="#d3d3d0" /></Icon>
      </ToolButton>
      <ToolButton label="Macros">
        <Icon>
          <path d="M3 3h18l1 19H2z" fill="#ececea" stroke="#8f8f8c" />
          <path d="M4 3h16" stroke="#b5a02a" strokeWidth="2.500" strokeDasharray="1.500 .800" />
          <path d="M5 9h12M5 12h12M5 15h9" stroke="#bbb" />
          <path d="M10 17 22 8.500l1.500 2L12 18z" fill="#f2a04a" stroke="#7d4306" strokeWidth=".700" />
        </Icon>
      </ToolButton>
      <ToolButton label="Run macro">
        <Icon><path d="M6 5.500l12 6.500-12 6.500z" fill="#c6c6c3" stroke="#adadaa" /></Icon>
      </ToolButton>
      <span className="ml-px flex"><Handle /></span>
      <Tools items={viewIcons} />
      <span className="ml-px flex"><MenuArrow label="Draw style menu" /></span>
      <Separator />
      <ToolButton label="Axonometric"><Cube /></ToolButton>
      <Separator />
      <ToolButton label="Front"><Cube face={faces.front} /></ToolButton>
      <ToolButton label="Top view"><Cube face={faces.top} /></ToolButton>
      <ToolButton label="Right"><Cube face={faces.right} /></ToolButton>
      <Separator />
      <ToolButton label="Rear"><Cube face={faces.rear} /></ToolButton>
      <ToolButton label="Bottom"><Cube face={faces.bottom} /></ToolButton>
      <ToolButton label="Left"><Cube face={faces.left} /></ToolButton>
      <Separator />
      <ToolButton label="Measure">
        <Icon>
          <path d="M2 9l14 13.500 6-6v2l-5 5L2 12z" fill="#444" />
          <path d="M8 1 22 14l-5.500 7L1.500 7.500z" fill="#1b93a8" stroke="#06323b" />
          <path d="M10 3l-2 2.500M13 5.500l-1.500 2M16 8.500 14 11M19 11.500l-1.500 2" stroke="#06323b" />
        </Icon>
      </ToolButton>
    </div>
  );
}

function DraftToolbar() {
  return (
    <div role="toolbar" aria-label="Draft" className="flex h-10 items-center overflow-hidden">
      <Handle />
      <button type="button" className={`${boxed} ml-px w-[83px] gap-1 text-[#3c3c3c]`}>
        <Icon size={16}>
          <path d="M5 4l14-3v19L5 23z" fill="#29b6c0" stroke="#0a3e44" strokeWidth="1.500" />
          <path d="M9 8.500l7-2v9l-7 2.500z" fill="#fff" stroke="#0a3e44" strokeWidth="2" />
          <path d="M1 8h4M1 17h4M19 6h4M19 15h4" stroke="#0a3e44" strokeWidth="1.500" />
        </Icon>
        Top
      </button>
      <div className="ml-[2px] flex items-center gap-[2px]">
        <button type="button" aria-label="Construction mode" className={`${boxed} w-5`}>
          <Icon size={17}>
            <path d="M2 19c4-3 5-10 13-13l6 1-1 6c-3 2-7 5-9 2-2 0-4 4-9 4z" fill="#169a8d" stroke="#06413b" strokeWidth="1.500" />
            <path d="M10 12.500l6-3.500 2 1.500-4 2.500" fill="#dff5f2" />
          </Icon>
        </button>
        <button type="button" aria-label="Line colour" className={`${boxed} w-5`}>
          <i className="size-4 bg-black" />
        </button>
        <button type="button" aria-label="Face colour" className={`${boxed} w-5`}>
          <i className="size-4 bg-[#c9c9c9]" />
        </button>
        <Spin label="Line width" value="2px" />
      </div>
      <span className="ml-[2px] flex"><Spin label="Text size" value="3,00" wide /></span>
      <button type="button" aria-label="Apply style" className={`${boxed} mr-[3px] ml-[2px] w-5`}>
        <Icon size={18}>
          <path d="M4 2h7v7H4z" fill="#e81f1f" stroke="#222" /><path d="M4 9h7v6H4z" fill="#f5f11c" stroke="#222" /><path d="M4 15h7v7H4z" fill="#25d32b" stroke="#222" />
          <path d="M8 9.500h7V5l8 7-8 7v-4.500H8z" fill="#2c62dd" stroke="#0c1d4d" />
        </Icon>
      </button>
      <Handle />
      <Tools items={draftIcons} />
      <span className="mx-px flex"><Handle /></span>
      <Tools items={modifyIcons} />
      <button type="button" aria-label="More tools" className="ml-auto pr-[3px] text-[14px] font-bold text-black">»</button>
    </div>
  );
}

export default function App() {
  return (
    <div className="flex min-h-screen flex-col overflow-hidden border-r-2 border-black bg-[#f1f0ee] font-['Noto_Sans','Open_Sans',sans-serif] text-[14px] text-[#4c4c4c]">
      <div className="flex h-[2px] justify-end bg-[#3c3b37]">
        <i className="mr-[330px] w-10 bg-[#0f6ba8]" />
      </div>
      <FileToolbar />
      <DraftToolbar />

      <div className="flex flex-1">
        <ComboView />
        <div className="flex w-[6px] shrink-0 flex-col items-center justify-center gap-[2px]">
          <i className="h-px w-[3px] bg-[#b5b2af]" />
          <i className="h-px w-[3px] bg-[#b5b2af]" />
          <i className="h-px w-[3px] bg-[#b5b2af]" />
        </div>
        <main className="flex min-w-0 flex-1 flex-col">
          <Viewport />
          <div role="tablist" className="flex h-8 items-start border-t border-[#b5b2af]">
            <DocumentTab title="Unnamed : 1" />
            <DocumentTab title="F2-T22-ejemplo-ini : 1" active />
          </div>
        </main>
        <div role="toolbar" aria-label="Snapping" className="flex w-[30px] shrink-0 flex-col items-center gap-[2px]">
          <span className="flex h-[10px] items-center gap-[2px] pt-[2px]">
            <i className="h-1 w-px bg-[#bdbbb8]" />
            <i className="h-1 w-px bg-[#bdbbb8]" />
            <i className="h-1 w-px bg-[#bdbbb8]" />
          </span>
          {snapIcons.map((snap) => (
            <button
              key={snap.label}
              type="button"
              aria-label={snap.label}
              aria-pressed={snap.on}
              className={`flex size-6 items-center justify-center rounded border border-[#b3b0ac] ${snap.on ? "bg-[#e3e1df]" : "bg-[#fafafa]"}`}
            >
              <Icon size={22}>{snap.art}</Icon>
            </button>
          ))}
        </div>
      </div>

      <footer className="mt-px flex h-[30px] items-center justify-between border-t border-[#d3d1ce] pr-[2px] pl-[6px]">
        <span>Touched (but must be executed)</span>
        <span>132.61 x 79.38 mm</span>
      </footer>
    </div>
  );
}
